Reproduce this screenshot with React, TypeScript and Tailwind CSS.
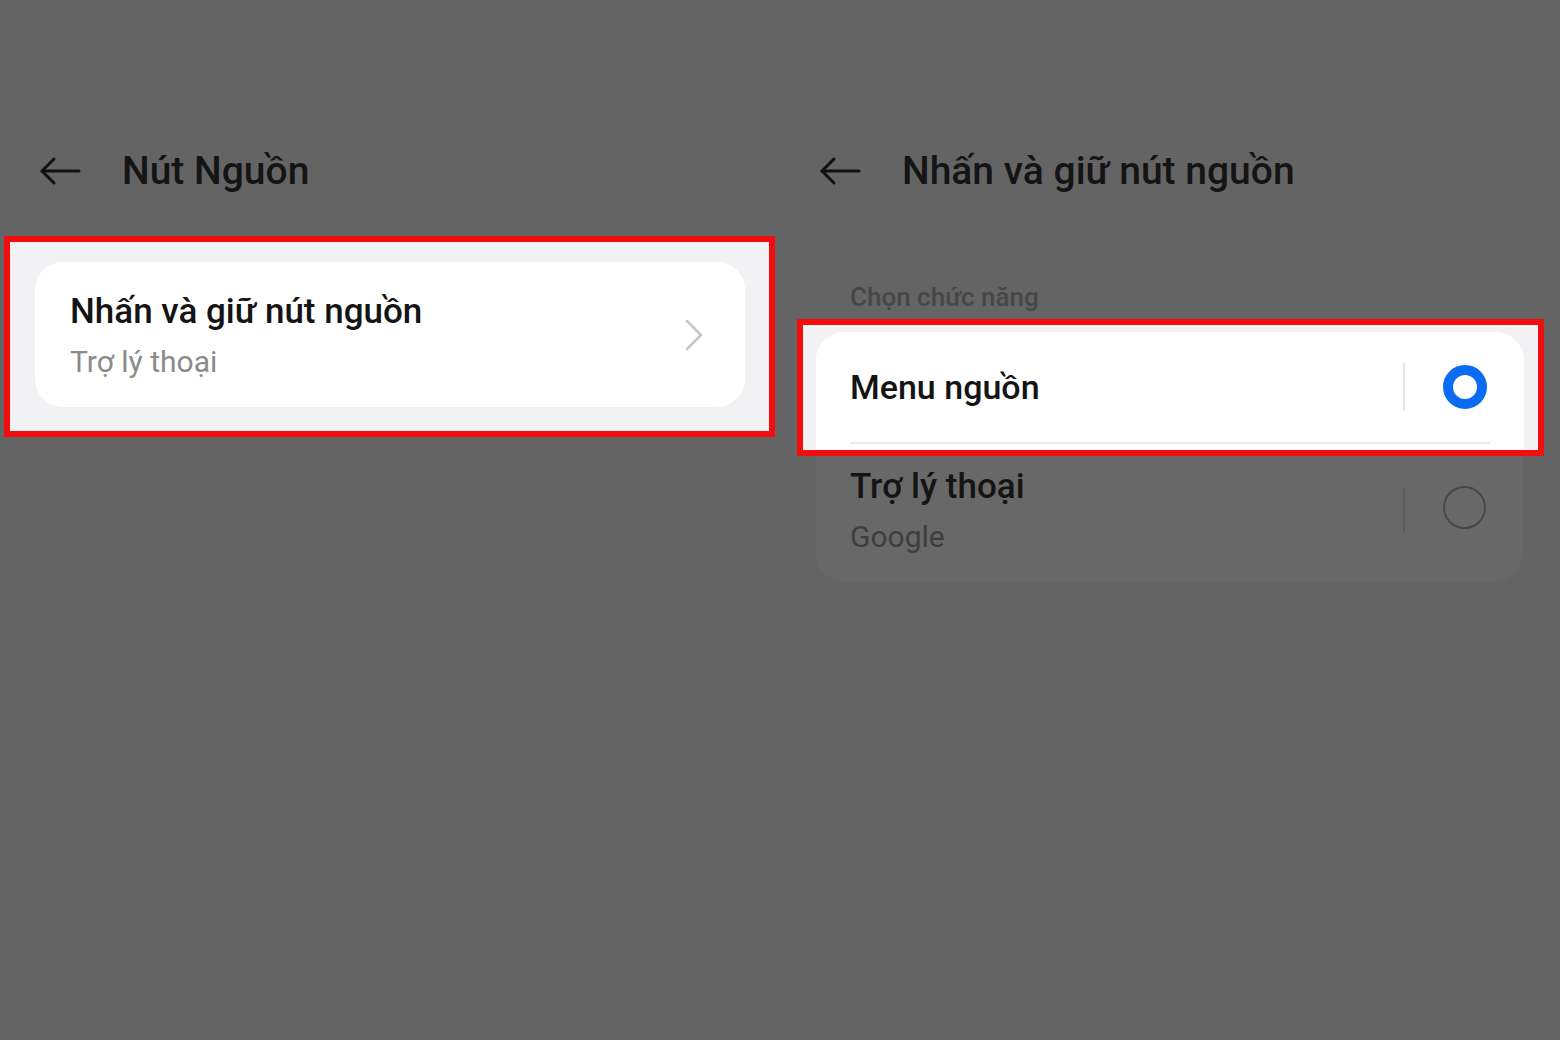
const FONT = { fontFamily: "Roboto, 'Noto Sans', sans-serif" };

function BackArrow() {
  return (
    <svg width="42" height="30" viewBox="0 0 42 30" fill="none" stroke="#111" strokeWidth="3" strokeLinecap="round" strokeLinejoin="round">
      <path d="M40 15H3" />
      <path d="M15 3L3 15l12 12" />
    </svg>
  );
}

function Header({ title }: { title: string }) {
  return (
    <div className="flex h-[62px] items-center">
      <div className="ml-[39px] w-[83px]">
        <BackArrow />
      </div>
      <span className="text-[39px] font-medium text-[#141414]">{title}</span>
    </div>
  );
}

function Radio({ checked }: { checked: boolean }) {
  if (checked) {
    return <span className="block h-[44px] w-[44px] rounded-full border-[10px] border-[#0b6cf2] bg-white" />;
  }
  return <span className="block h-[43px] w-[43px] rounded-full border-[2.5px] border-[#474747]" />;
}

export default function App() {
  return (
    <div className="flex h-[1040px] w-[1560px] bg-[#646464]" style={FONT}>
      {/* power button settings */}
      <div className="w-[780px] pt-[140px]">
        <Header title="Nút Nguồn" />
        <div className="ml-[4px] mt-[34px] w-[771px] border-[6px] border-[#f30d0d] bg-[#f2f2f4] pb-[24px] pl-[25px] pr-[24px] pt-[20px]">
          <div className="flex h-[145px] items-center rounded-[28px] bg-white pl-[35px] pr-[42px]">
            <div className="flex flex-1 flex-col pt-[2px]">
              <span className="text-[35px] font-medium leading-[42px] text-[#141414]">Nhấn và giữ nút nguồn</span>
              <span className="mt-[10px] text-[30px] leading-[38px] text-[#8a8a8a]">Trợ lý thoại</span>
            </div>
            <svg width="18" height="32" viewBox="0 0 18 32" fill="none" stroke="#c6c6c6" strokeWidth="2.5" strokeLinecap="round" strokeLinejoin="round">
              <path d="M2 2l14 14L2 30" />
            </svg>
          </div>
        </div>
      </div>

      {/* long press options */}
      <div className="flex-1 pt-[140px]">
        <Header title="Nhấn và giữ nút nguồn" />
        <div className="mt-[80px] pl-[70px] text-[26px] font-medium leading-[30px] text-[#474747]">Chọn chức năng</div>
        <div className="ml-[17px] mt-[7px] w-[747px] border-[6px] border-[#f30d0d] bg-[#f2f2f4] pl-[13px] pr-[14px] pt-[7px]">
          <div className="rounded-t-[28px] bg-white px-[34px]">
            <div className="flex h-[110px] items-center">
              <span className="flex-1 text-[34px] font-medium text-[#141414]">Menu nguồn</span>
              <span className="h-[48px] w-[2px] bg-[#e4e4e4]" />
              <span className="ml-[38px] mr-[3px]">
                <Radio checked />
              </span>
            </div>
            <div className="h-[2px] bg-[#ececec]" />
            <div className="h-[6px]" />
          </div>
        </div>
        <div className="ml-[36px] flex h-[126px] w-[707px] items-start rounded-b-[28px] bg-[#686868] px-[34px]">
          <div className="flex flex-1 flex-col pt-[10px]">
            <span className="text-[35px] font-medium leading-[42px] text-[#141414]">Trợ lý thoại</span>
            <span className="mt-[10px] text-[30px] leading-[38px] text-[#3e3e3e]">Google</span>
          </div>
          <span className="mt-[31px] h-[45px] w-[2px] bg-[#5c5c5c]" />
          <span className="ml-[38px] mr-[3px] mt-[30px]">
            <Radio checked={false} />
          </span>
        </div>
      </div>
    </div>
  );
}
